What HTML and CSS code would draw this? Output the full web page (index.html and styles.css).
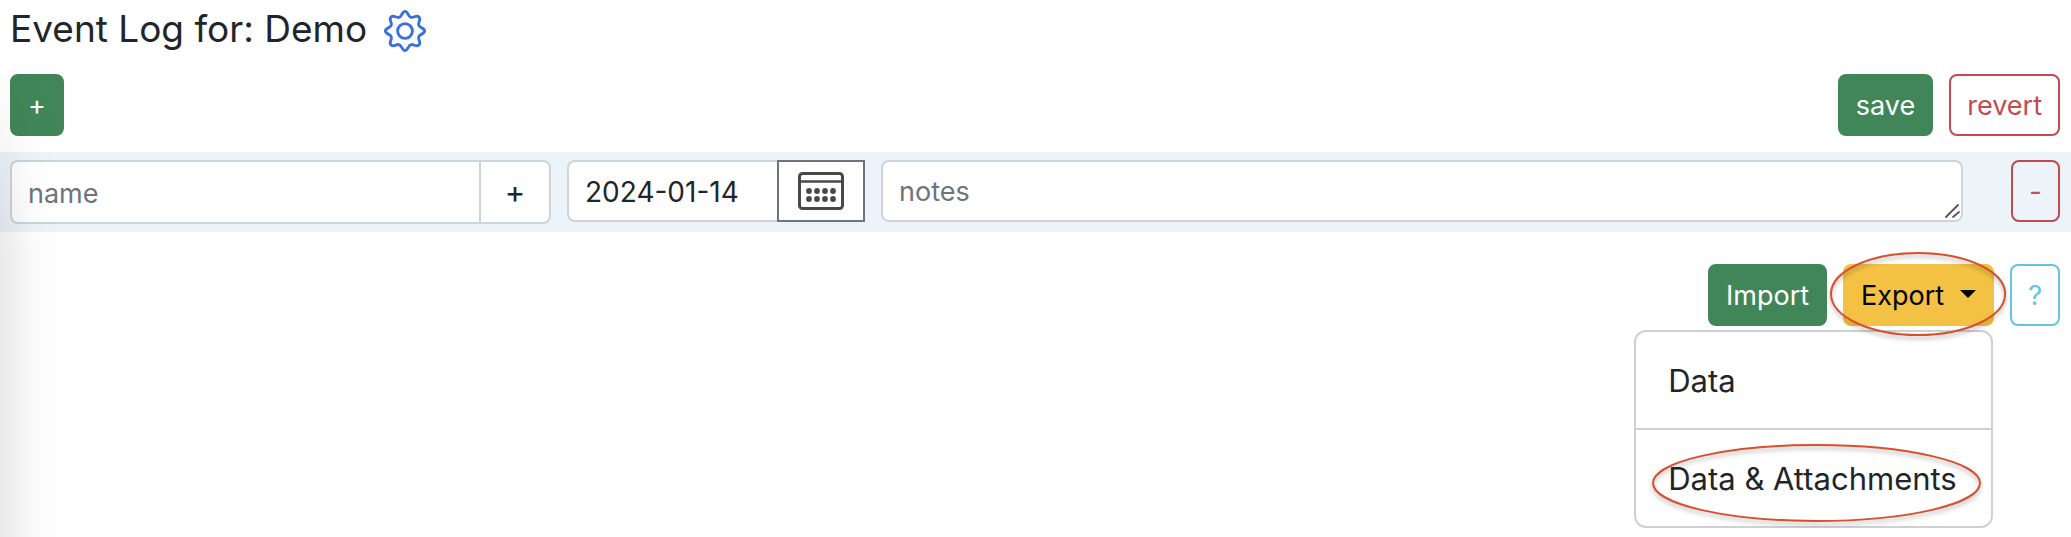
FILE: index.html
```html
<!DOCTYPE html>
<html lang="en">
<head>
<meta charset="utf-8">
<title>Event Log for: Demo</title>
<link rel="stylesheet" href="styles.css">
</head>
<body>
<main class="page">
  <header class="heading">
    <h1 class="title">Event Log for: Demo</h1>
    <button class="gear" type="button" aria-label="Settings">
      <svg viewBox="0 0 44 44" width="44" height="44" fill="none" stroke="#3b71db" stroke-width="2.9" stroke-linejoin="round">
        <path d="M22 2.4C25.2 2.4 25 8 28.2 8.4C31 9 33.4 5.5 36 8C38.5 10.6 35 13 35.6 15.8C36 19 41.6 18.8 41.6 22C41.6 25.2 36 25 35.6 28.2C35 31 38.5 33.4 36 36C33.4 38.5 31 35 28.2 35.6C25 36 25.2 41.6 22 41.6C18.8 41.6 19 36 15.8 35.6C13 35 10.6 38.5 8 36C5.5 33.4 9 31 8.4 28.2C8 25 2.4 25.2 2.4 22C2.4 18.8 8 19 8.4 15.8C9 13 5.5 10.6 8 8C10.6 5.5 13 9 15.8 8.4C19 8 18.8 2.4 22 2.4Z"/>
        <circle cx="22" cy="22" r="7.4"/>
      </svg>
    </button>
  </header>

  <div class="toolbar">
    <button class="btn btn-green" type="button" aria-label="Add event">+</button>
    <div class="actions">
      <button class="btn btn-green" type="button">save</button>
      <button class="btn btn-red" type="button">revert</button>
    </div>
  </div>

  <form class="event-row">
    <div class="name-group">
      <input class="field" type="text" placeholder="name" aria-label="name">
      <button class="name-add" type="button" aria-label="Add name">+</button>
    </div>
    <div class="date-group">
      <input class="field" type="text" value="2024-01-14" aria-label="date">
      <button class="calendar" type="button" aria-label="Pick date">
        <svg viewBox="0 0 46 38" width="46" height="38" fill="none" stroke="#484848" stroke-width="3">
          <rect x="1.5" y="1.5" width="43" height="35" rx="3"/>
          <path d="M2 9.5H44" stroke-width="2.4"/>
          <g fill="#484848" stroke="none">
            <circle cx="11" cy="19" r="2.9"/><circle cx="19" cy="19" r="2.9"/><circle cx="27" cy="19" r="2.9"/><circle cx="35" cy="19" r="2.9"/>
            <circle cx="11" cy="27" r="2.9"/><circle cx="19" cy="27" r="2.9"/><circle cx="27" cy="27" r="2.9"/><circle cx="35" cy="27" r="2.9"/>
          </g>
        </svg>
      </button>
    </div>
    <div class="notes-group">
      <textarea class="notes" rows="1" placeholder="notes" aria-label="notes"></textarea>
      <svg class="grip" viewBox="0 0 16 16" width="16" height="16" stroke="#555" stroke-width="1.8" stroke-linecap="round">
        <path d="M2 14L14 2M9 14L15 9"/>
      </svg>
    </div>
    <button class="btn btn-red remove" type="button" aria-label="Remove event">-</button>
  </form>

  <div class="transfer">
    <button class="btn btn-green" type="button">Import</button>
    <div class="export">
      <button class="btn btn-yellow" type="button" aria-expanded="true">Export<span class="caret"></span></button>
      <svg class="mark mark-export" viewBox="0 0 176 84" preserveAspectRatio="none" fill="none" stroke="#d9502f" stroke-width="2"><ellipse cx="88" cy="42" rx="87" ry="41"/></svg>
      <div class="menu">
        <a class="menu-item" href="#data">Data</a>
        <a class="menu-item" href="#attachments">Data &amp; Attachments
          <svg class="mark mark-item" viewBox="0 0 332 78" preserveAspectRatio="none" fill="none" stroke="#d9502f" stroke-width="2"><ellipse cx="166" cy="39" rx="165" ry="38"/></svg>
        </a>
      </div>
    </div>
    <button class="btn btn-cyan" type="button" aria-label="Help">?</button>
  </div>
</main>
</body>
</html>
```
FILE: styles.css
```css
* { box-sizing: border-box; }

body {
  margin: 0;
  background: #fff;
  color: #212529;
  font: 28px/42px Inter, "Liberation Sans", sans-serif;
}

button, input, textarea { font: inherit; color: inherit; margin: 0; }

.page { position: relative; min-height: 100vh; }

/* soft shade along the left edge */
.page::after {
  content: "";
  position: absolute;
  inset: 60px auto 0 0;
  width: 60px;
  pointer-events: none;
  background: linear-gradient(to right, rgba(0, 0, 0, .085), rgba(0, 0, 0, .06) 25%, rgba(0, 0, 0, .02) 55%, transparent);
  -webkit-mask-image: linear-gradient(transparent, #000 200px);
  mask-image: linear-gradient(transparent, #000 200px);
}

.heading {
  display: flex;
  align-items: center;
  gap: 16px;
  height: 58px;
  padding: 0 10px;
}

.title { margin: 0; font-size: 37px; font-weight: 400; line-height: 56px; }

.gear { display: flex; padding: 4px 0 0; border: 0; background: none; }

.toolbar {
  display: flex;
  justify-content: space-between;
  padding: 16px 11px 16px 10px;
}

.actions { display: flex; gap: 16px; }

.btn {
  height: 62px;
  padding: 2px 16px 0;
  border: 2px solid;
  border-radius: 8px;
  background: none;
  font-size: 27px;
}

.btn-green { background: #418658; border-color: #418658; color: #fff; }
.btn-red { border-color: #c24a50; color: #c24a50; }
.btn-yellow { background: #f3c244; border-color: #f3c244; color: #000; }
.btn-cyan { border-color: #67c3e3; color: #67c3e3; }

.event-row {
  display: flex;
  align-items: flex-start;
  gap: 16px;
  padding: 8px 11px 8px 10px;
  background: #ecf3f9;
}

.name-group { display: flex; flex: 1; min-width: 0; height: 64px; }
.date-group { display: flex; width: 298px; height: 62px; }
.notes-group { position: relative; display: flex; flex: 2; min-width: 0; height: 62px; }

.field {
  flex: 1;
  min-width: 0;
  padding: 2px 16px 0;
  border: 2px solid #ced4da;
  border-right: 0;
  border-radius: 8px 0 0 8px;
  background: #fff;
}

.name-add {
  width: 72px;
  padding: 0;
  border: 2px solid #ced4da;
  border-radius: 0 8px 8px 0;
  background: #fff;
  font-size: 31px;
}

.calendar {
  display: flex;
  align-items: center;
  justify-content: center;
  width: 88px;
  padding: 0;
  border: 2px solid #6c757d;
  background: #fff;
}

.notes {
  width: 100%;
  padding: 9px 16px 7px;
  border: 2px solid #ced4da;
  border-radius: 8px;
  background: #fff;
  resize: none;
  overflow: hidden;
}

::placeholder { color: #6c757d; opacity: 1; font-size: 27px; }

.grip { position: absolute; right: 3px; bottom: 3px; }

.remove { width: 49px; margin-left: 32px; }

.transfer {
  display: flex;
  justify-content: flex-end;
  gap: 16px;
  padding: 32px 11px 0;
}

.export { position: relative; }

.caret {
  display: inline-block;
  margin-left: 16px;
  border: 8px solid transparent;
  border-top-color: #000;
  border-bottom: 0;
  vertical-align: 7px;
}

.menu {
  position: absolute;
  top: 66px;
  right: 1px;
  min-width: 359px;
  border: 2px solid #ced0d2;
  border-radius: 12px;
  background: #fff;
}

.menu-item {
  position: relative;
  display: block;
  padding: 25px 32px 23px;
  color: inherit;
  font-size: 31px;
  line-height: 48px;
  text-decoration: none;
  white-space: nowrap;
}

.menu-item + .menu-item { border-top: 2px solid #ced0d2; }

.mark {
  position: absolute;
  z-index: 1;
  pointer-events: none;
  filter: drop-shadow(0 3px 2px rgba(0, 0, 0, .3));
}

.mark-export { top: -12px; left: -13px; width: calc(100% + 25px); height: 84px; }
.mark-item { top: 14px; left: 16px; width: calc(100% - 26px); height: 78px; }
```
